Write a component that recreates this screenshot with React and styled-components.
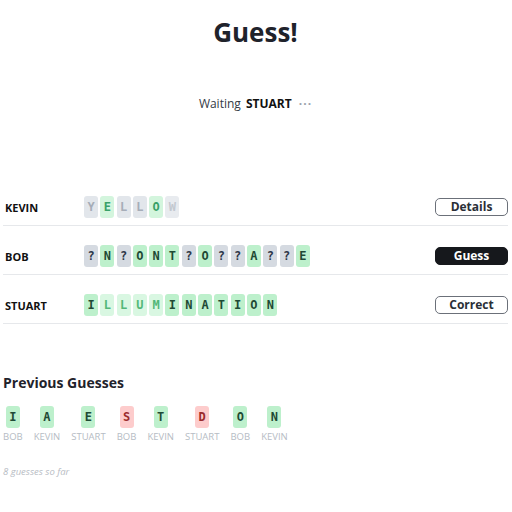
import React from 'react'
import styled, { createGlobalStyle } from 'styled-components'

const GlobalStyle = createGlobalStyle`
  body {
    margin: 0;
    background: #ffffff;
    font-family: "Open Sans", "Noto Sans", sans-serif;
    color: #1a202c;
  }
`

const players = [
  {
    name: 'KEVIN',
    action: 'Details',
    tiles: [
      ['Y', 'grayFaded'], ['E', 'hint'], ['L', 'grayFaded'],
      ['L', 'grayFaded'], ['O', 'hint'], ['W', 'grayFaint'],
    ],
  },
  {
    name: 'BOB',
    action: 'Guess',
    tiles: '?N?ONT?O??A??E'.split('').map(c => [c, c === '?' ? 'gray' : 'green']),
  },
  {
    name: 'STUART',
    action: 'Correct',
    tiles: 'ILLUMINATION'.split('').map((c, i) => [c, i >= 1 && i <= 4 ? 'greenFaded' : 'green']),
  },
]

const previous = [
  ['I', 'BOB', 'green'], ['A', 'KEVIN', 'green'], ['E', 'STUART', 'green'],
  ['S', 'BOB', 'red'], ['T', 'KEVIN', 'green'], ['D', 'STUART', 'red'],
  ['O', 'BOB', 'green'], ['N', 'KEVIN', 'green'],
]

const tileColors = {
  gray: { bg: '#d5dae1', fg: '#2d3748' },
  grayFaded: { bg: '#e2e6eb', fg: '#a6adb8' },
  grayFaint: { bg: '#e8ebef', fg: '#c3c8cf' },
  hint: { bg: '#d3f5dd', fg: '#38a169' },
  green: { bg: '#bdf0cc', fg: '#1f4a35' },
  greenFaded: { bg: '#d9f7e2', fg: '#52b778' },
  red: { bg: '#fdcccc', fg: '#9b2c2c' },
}

export default function App() {
  return (
    <Page>
      <GlobalStyle />
      <Title>Guess!</Title>
      <Status>
        Waiting <strong>STUART</strong> <Dots>···</Dots>
      </Status>
      <Players>
        {players.map(p => (
          <Row key={p.name}>
            <Name>{p.name}</Name>
            <Tiles>
              {p.tiles.map(([c, kind], i) => (
                <Tile key={i} kind={kind}>{c}</Tile>
              ))}
            </Tiles>
            <ActionButton dark={p.action === 'Guess'}>{p.action}</ActionButton>
          </Row>
        ))}
      </Players>
      <SectionTitle>Previous Guesses</SectionTitle>
      <History>
        {previous.map(([c, who, kind], i) => (
          <HistoryItem key={i}>
            <Tile kind={kind}>{c}</Tile>
            <Who>{who}</Who>
          </HistoryItem>
        ))}
      </History>
      <Footnote>8 guesses so far</Footnote>
    </Page>
  )
}

const Page = styled.div`
  width: 512px;
  padding: 0 4px 0 3px;
  box-sizing: border-box;
`

const Title = styled.h1`
  margin: 0;
  padding-top: 14px;
  text-align: center;
  font-size: 26px;
  line-height: 36px;
  font-weight: 700;
  color: #1f232b;
`

const Status = styled.div`
  margin-top: 46px;
  text-align: center;
  font-size: 12px;
  line-height: 16px;
  color: #333a45;
  strong {
    font-weight: 700;
    color: #111;
    margin: 0 4px 0 2px;
  }
`

const Dots = styled.span`
  color: #9aa1ab;
  letter-spacing: 1px;
  font-weight: 700;
`

const Players = styled.div`
  margin-top: 65px;
`

const Row = styled.div`
  display: flex;
  align-items: center;
  padding: 19px 0 7px 2px;
  border-bottom: 1px solid #e6e8eb;
`

const Name = styled.div`
  width: 79px;
  font-size: 11px;
  font-weight: 700;
  color: #111;
`

const Tiles = styled.div`
  flex: 1;
  display: flex;
  gap: 2.3px;
`

const Tile = styled.div`
  width: 14px;
  height: 22px;
  border-radius: 3px;
  display: flex;
  align-items: center;
  justify-content: center;
  font-family: "DejaVu Sans Mono", "Liberation Mono", monospace;
  font-weight: 700;
  font-size: 12px;
  background: ${p => tileColors[p.kind].bg};
  color: ${p => tileColors[p.kind].fg};
`

const ActionButton = styled.button`
  width: 73px;
  height: 18px;
  padding: 0;
  border-radius: 5px;
  border: 1px solid ${p => (p.dark ? '#16181c' : '#6b7079')};
  background: ${p => (p.dark ? '#16181c' : '#ffffff')};
  color: ${p => (p.dark ? '#ffffff' : '#2a2f37')};
  font-family: "Open Sans", "Noto Sans", sans-serif;
  font-weight: 700;
  font-size: 12px;
  line-height: 16px;
`

const SectionTitle = styled.h2`
  margin: 49px 0 0;
  font-size: 14px;
  line-height: 20px;
  font-weight: 700;
  color: #1f232b;
`

const History = styled.div`
  display: flex;
  gap: 11px;
  margin-top: 13px;
`

const HistoryItem = styled.div`
  display: flex;
  flex-direction: column;
  align-items: center;
  gap: 3px;
`

const Who = styled.div`
  font-size: 9.5px;
  line-height: 12px;
  color: #b6bcc4;
`

const Footnote = styled.div`
  margin-top: 22px;
  font-size: 9.5px;
  font-style: italic;
  color: #b8bdc4;
`
